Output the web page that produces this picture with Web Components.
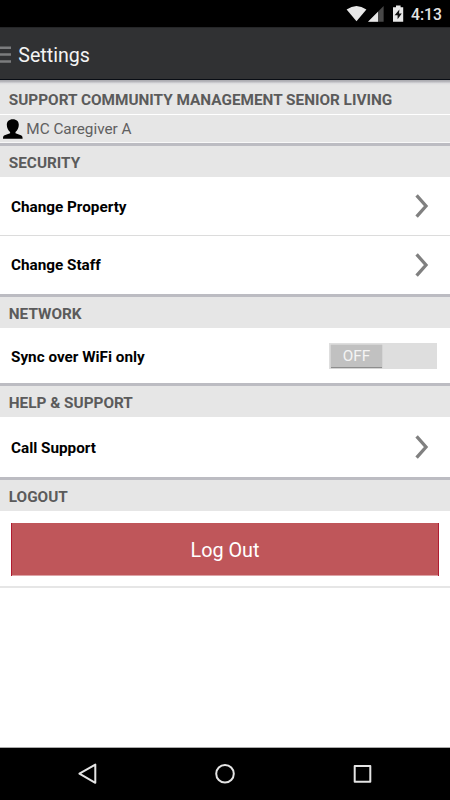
<!DOCTYPE html>
<html lang="en">
<head>
<meta charset="utf-8">
<title>Settings</title>
<style>
html, body { margin: 0; height: 100%; background: #fff; font-family: Roboto, "Liberation Sans", sans-serif; overflow: hidden; }
</style>
</head>
<body>
<settings-screen></settings-screen>
<script>
function define(name, html) {
  const template = document.createElement('template');
  template.innerHTML = html;
  customElements.define(name, class extends HTMLElement {
    constructor() {
      super();
      this.attachShadow({ mode: 'open' }).append(template.content.cloneNode(true));
    }
  });
}

define('status-bar', `
<style>
:host { display: flex; height: 27px; background: #000; color: #e4e4e4; justify-content: flex-end; align-items: center; padding-right: 8px; box-sizing: border-box; }
svg { display: block; }
span { font-size: 15.7px; line-height: 27px; font-weight: 500; width: 31px; margin-left: 5px; white-space: nowrap; padding-top: 1px; box-sizing: border-box; height: 27px; }
</style>
<svg width="60" height="27" viewBox="346 0 60 27">
  <path d="M346.6 9.6Q356.5 2.6 366.4 9.6L356.5 21.3Z" fill="#e8e8e8"/>
  <path d="M368 21.8L383.6 6V21.8Z" fill="#484848"/>
  <path d="M368 21.8L378 11.8V21.8Z" fill="#e8e8e8"/>
  <path d="M393 7.2H396V5.6H400.6V7.2H403.2V21.8H393Z" fill="#e8e8e8"/>
  <path d="M399.4 9.4L394.6 15.2H397.6V19.3L401.8 13.4H399Z" fill="#111"/>
</svg>
<span>4:13</span>`);

define('app-bar', `
<style>
:host { display: flex; height: 53px; box-sizing: border-box; align-items: center; background: #303133; border-top: 1px solid #252628; border-bottom: 1px solid #090d14; color: #f4f4f4; font-size: 19.6px; }
svg { display: block; margin-right: 7.3px; }
span { line-height: 24px; padding-top: 4px; }
</style>
<svg width="11" height="18" viewBox="0 0 11 18"><path d="M0 3h11M0 9.8h11M0 16.6h11" stroke="#7b7c7e" stroke-width="2.5" transform="translate(0 -.2)"/></svg>
<span><slot></slot></span>`);

define('section-title', `
<style>
:host { display: block; height: 34px; box-sizing: border-box; border-top: 3px solid #bcbcc2; background: #e6e6e6; color: #5b5b5b; font-size: 15.33px; font-weight: 700; line-height: 34px; padding-left: 8.8px; white-space: nowrap; }
:host([first]) { border-top: 0; padding-top: 3px; background: linear-gradient(#a9a9ae 0, #b9b9be 2px, #dadadd 3px, #e6e6e6 5px); }
</style>
<slot></slot>`);

define('user-row', `
<style>
:host { display: flex; height: 29px; box-sizing: border-box; background: #e6e6e6; border-top: 1px solid #fff; border-bottom: 1px solid #f8f8f8; align-items: center; padding-left: 3px; color: #606060; font-size: 15.3px; }
svg { display: block; margin-right: 3.3px; }
</style>
<svg width="20" height="22" viewBox="3 117 20 22"><path d="M12.8 118.2C9 118.2 6.8 120.4 6.8 123.8C6.8 127 8.3 129.6 10.1 131V132.3L4.6 134.2C3.2 134.8 3 136 3 137.8H22.6C22.6 136 22.3 134.8 20.9 134.2L15.5 132.3V131C17.3 129.6 18.8 127 18.8 123.8C18.8 120.4 16.6 118.2 12.8 118.2Z"/></svg>
<span><slot></slot></span>`);

define('setting-row', `
<style>
:host { display: flex; height: var(--h, 58px); box-sizing: border-box; align-items: center; justify-content: space-between; padding: var(--top, 2px) 13px 0 11px; background: #fff; color: #000; font-size: 15.27px; font-weight: 700; }
:host([divided]) { border-bottom: 1px solid #dcdcdc; }
</style>
<span><slot></slot></span><slot name="end"></slot>`);

define('chevron-icon', `
<style>
:host { display: block; width: 14px; height: 24px; margin: var(--lift, -3px) 8px 0 0; }
svg { display: block; }
</style>
<svg width="14" height="24" viewBox="0 0 14 24"><path d="M1.6 1.4L11 12L1.6 22.6" fill="none" stroke="#808080" stroke-width="3.3"/></svg>`);

define('toggle-switch', `
<style>
:host { display: block; width: 108px; height: 26px; background: #dedede; box-sizing: border-box; padding: 2px 0 0 2px; margin-top: -1px; }
div { width: 51px; height: 23px; box-sizing: border-box; background: #c1c1c1; border-bottom: 1px solid #8d8d8d; box-shadow: 0 0 1px #aaa; color: #f4f4f4; font-size: 15.3px; font-weight: 400; line-height: 23px; text-align: center; }
</style>
<div><slot></slot></div>`);

define('logout-panel', `
<style>
:host { display: block; height: 77px; box-sizing: border-box; padding: 12px 11px 0; border-bottom: 2px solid #e6e6e6; }
button { display: block; width: 100%; height: 53px; box-sizing: border-box; padding: 2px 0 0; border: solid #b01c30; border-width: 0 1px; background: linear-gradient(#bf565a 52px, #dda3a6 52px); color: #fff; font: 400 19.8px Roboto, sans-serif; }
</style>
<button><slot></slot></button>`);

define('nav-bar', `
<style>
:host { display: block; height: 53px; box-sizing: border-box; border-top: 1px solid #aaa; background: #000; margin-top: auto; }
svg { display: block; }
</style>
<svg width="450" height="52" viewBox="0 748 450 52" fill="none" stroke="#e4e4e4" stroke-width="2" stroke-linejoin="round">
<path d="M95.3 764.6V782.8L79.4 773.7Z"/><circle cx="225" cy="773.7" r="8.8"/><rect x="354.7" y="766.1" width="15.6" height="15.6"/>
</svg>`);

define('settings-screen', `
<style>
:host { display: flex; flex-direction: column; width: 450px; height: 800px; background: #fff; }
:host > * { flex-shrink: 0; }
</style>
<status-bar></status-bar>
<app-bar>Settings</app-bar>
<section-title first>SUPPORT COMMUNITY MANAGEMENT SENIOR LIVING</section-title>
<user-row>MC Caregiver A</user-row>
<section-title>SECURITY</section-title>
<setting-row divided style="--h:59px;--top:1px;--lift:-1px">Change Property<chevron-icon slot="end"></chevron-icon></setting-row>
<setting-row style="--top:0px;--lift:-1px">Change Staff<chevron-icon slot="end"></chevron-icon></setting-row>
<section-title>NETWORK</section-title>
<setting-row style="--h:55px">Sync over WiFi only<toggle-switch slot="end">OFF</toggle-switch></setting-row>
<section-title>HELP &amp; SUPPORT</section-title>
<setting-row style="--h:60px">Call Support<chevron-icon slot="end"></chevron-icon></setting-row>
<section-title>LOGOUT</section-title>
<logout-panel>Log Out</logout-panel>
<nav-bar></nav-bar>`);
</script>
</body>
</html>
